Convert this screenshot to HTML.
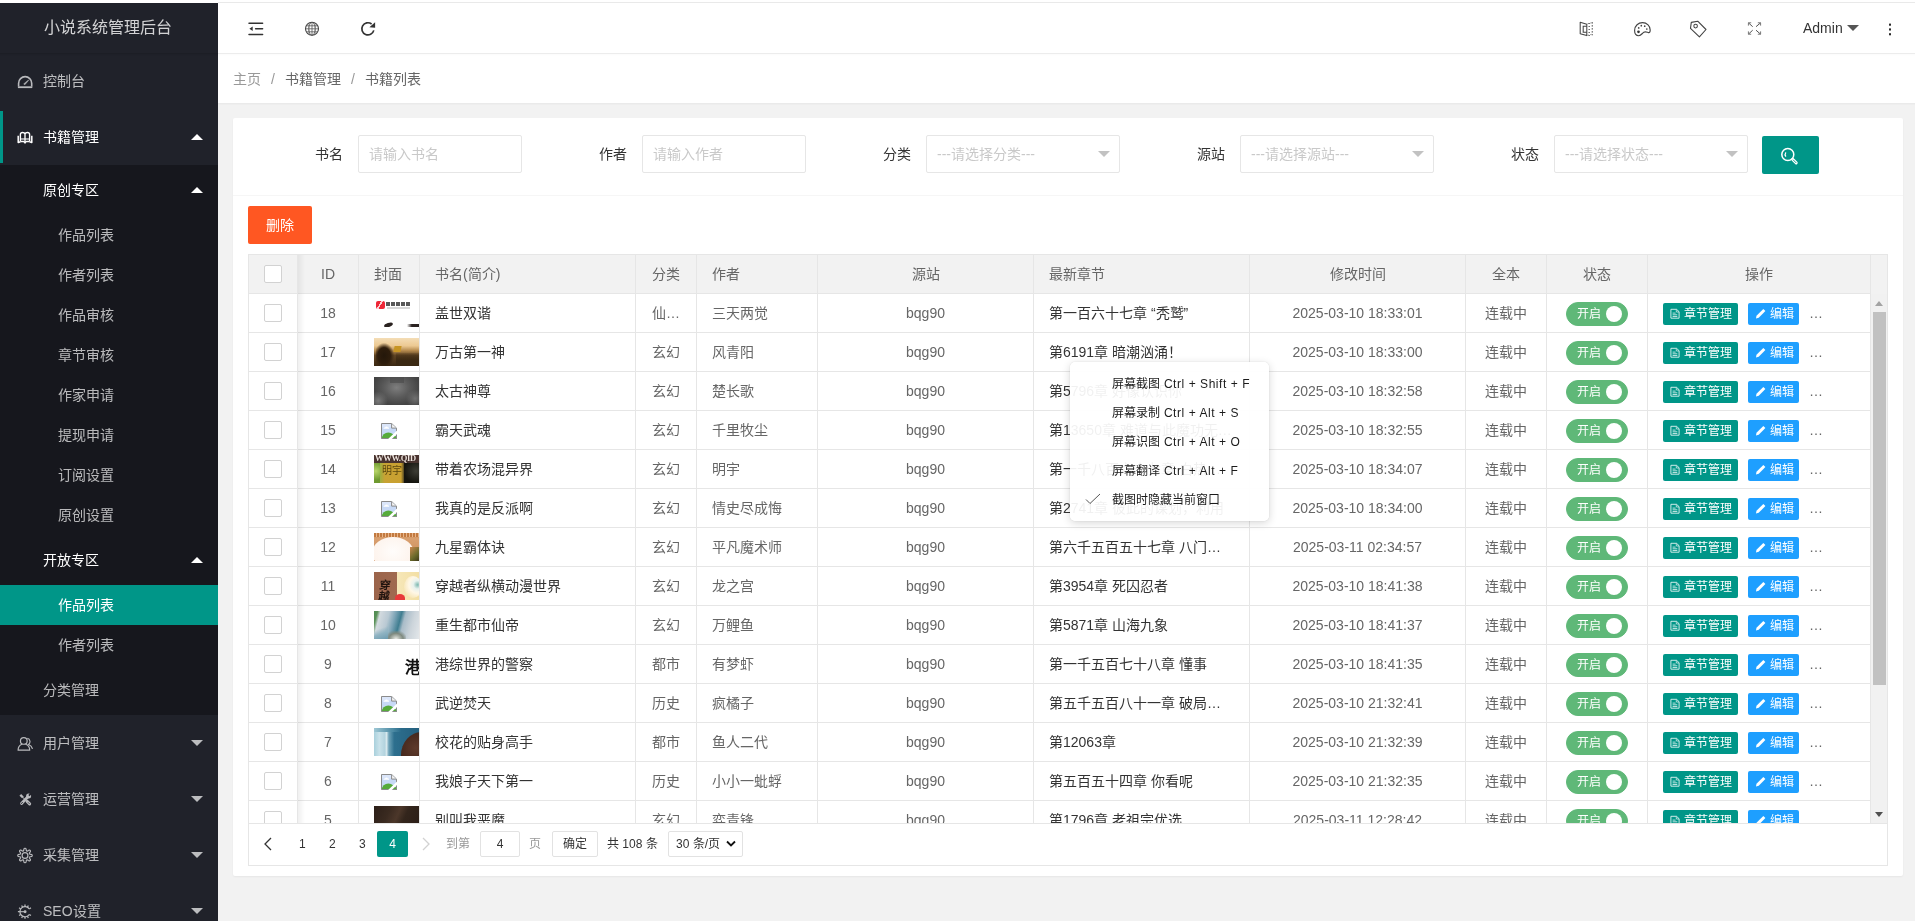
<!DOCTYPE html>
<html lang="zh-CN">
<head>
<meta charset="utf-8">
<title>小说系统管理后台</title>
<style>
*{box-sizing:border-box;margin:0;padding:0}
html,body{width:1915px;height:921px;overflow:hidden;background:#fff}
body{font-family:"Liberation Sans",sans-serif;font-size:14px;color:#333;line-height:24px;position:relative}
i,em{font-style:normal}
#topline{position:absolute;left:218px;top:2px;width:1697px;height:1px;background:#e9e9e9}
#pg{position:absolute;left:-2px;top:3px;width:1920px;height:918px;overflow:hidden;background:#f2f2f2;-webkit-font-smoothing:antialiased}
#side,#hd,#bc,#card,#ctx{will-change:transform}

/* ---------- side ---------- */
#side{position:absolute;left:0;top:0;width:220px;height:918px;background:#20222a;color:#fff;overflow:hidden}
#logo{position:absolute;left:0;top:0;width:220px;height:50px;line-height:50px;text-align:center;font-size:16px;color:rgba(255,255,255,.8);background:#20222a;box-shadow:0 1px 2px 0 rgba(0,0,0,.15);z-index:2}
#nav{position:absolute;left:0;top:50px;width:220px}
.ni{position:relative;height:56px;line-height:56px;padding-left:45px;color:rgba(255,255,255,.7);font-size:14px;white-space:nowrap}
.ni.on{color:#fff}
.ni svg.ic{position:absolute;left:19px;top:50%;margin-top:-8px}
.more{position:absolute;right:15px;top:50%;width:0;height:0;border:6px solid transparent;border-top-color:rgba(255,255,255,.7);margin-top:-3px}
.more.up{border-top-color:transparent;border-bottom-color:#fff;margin-top:-9px}
.child{background:rgba(0,0,0,.3);padding:5px 0}
.child .child{background:none}
.ci{position:relative;height:40px;line-height:40px;padding-left:45px;color:rgba(255,255,255,.7);white-space:nowrap}
.ci.on{color:#fff}
.ci.l2{padding-left:60px}
.ci.this{background:#009688;color:#fff}
#navbar{position:absolute;left:0;top:108px;width:5px;height:52px;background:#009688}

/* ---------- header ---------- */
#hd{position:absolute;left:220px;top:0;width:1700px;height:51px;background:#fff;border-bottom:1px solid #ececec;box-shadow:0 1px 2px 0 rgba(0,0,0,.02);z-index:3}
#hd svg{position:absolute}
#admin{position:absolute;left:1585px;top:0;height:50px;line-height:51px;font-size:14px;color:#333}
#admin i{position:absolute;left:44px;top:22px;border:6px solid transparent;border-top-color:#555;border-bottom:none}
#bc{position:absolute;left:220px;top:50px;width:1700px;height:50px;line-height:52px;background:#fff;padding-left:15px;font-size:14px;color:#666;box-shadow:0 1px 2px 0 rgba(0,0,0,.05);z-index:2;white-space:nowrap}
#bc span{margin:0 10px;color:#999}
#bc .a0{color:#999}

/* ---------- card ---------- */
#card{position:absolute;left:235px;top:115px;width:1670px;height:758px;background:#fff;border-radius:2px;box-shadow:0 1px 2px 0 rgba(0,0,0,.05)}
#fm{position:absolute;left:0;top:0;width:1670px;height:78px;border-bottom:1px solid #f6f6f6}
.lb{position:absolute;top:17px;width:110px;height:38px;line-height:20px;padding:9px 15px;text-align:right;color:#333;white-space:nowrap}
.ip{position:absolute;top:17px;height:38px;border:1px solid #e6e6e6;border-radius:2px;background:#fff;line-height:36px;padding-left:10px;color:#c9c9c9;font-size:14px;white-space:nowrap;overflow:hidden}
.ip i{position:absolute;right:9px;top:50%;margin-top:-3px;border:6px solid transparent;border-top-color:#c2c2c2;border-bottom:none}
#sbtn{position:absolute;left:1529px;top:18px;width:57px;height:38px;background:#009688;border-radius:2px}
#del{position:absolute;left:15px;top:88px;width:64px;height:38px;line-height:38px;text-align:center;background:#ff5722;color:#fff;font-size:14px;border-radius:2px}

/* ---------- table ---------- */
#tv{position:absolute;left:15px;top:136px;width:1640px;height:612px;border:1px solid #e6e6e6;overflow:hidden;color:#666}
#th{position:absolute;left:0;top:0;width:1638px;height:39px;background:#f2f2f2;border-bottom:1px solid #e6e6e6;z-index:2}
#tb{position:absolute;left:0;top:39px;width:1622px;height:529px;overflow:hidden}
.tr{position:absolute;left:0;width:1622px;height:39px;border-bottom:1px solid #e6e6e6}
.td,.thc{position:absolute;top:0;height:38px;line-height:28px;padding:5px 15px;border-right:1px solid #e6e6e6;white-space:nowrap;overflow:hidden;font-size:14px;color:#666}
.thc{height:38px}
.ctr{text-align:center}
.dk{color:#333}
.c0{left:0;width:49px;padding:5px 0;text-align:center;background:#fff}
#th .c0{background:#f2f2f2}
.c1{left:49px;width:61px}
.c2{left:110px;width:61px;padding-right:0}
.c3{left:171px;width:216px}
.c4{left:387px;width:61px}
.c5{left:448px;width:121px}
.c6{left:569px;width:216px}
.c7{left:785px;width:216px}
.c8{left:1001px;width:216px}
.c9c{left:1217px;width:81px}
.c10{left:1298px;width:101px;padding:5px 0}
.c11{left:1399px;width:223px}
.cb{display:inline-block;width:18px;height:18px;border:1px solid #d2d2d2;border-radius:2px;background:#fff;vertical-align:top;margin-top:5px}
#fixsh{position:absolute;left:49px;top:0;width:7px;height:568px;background:linear-gradient(to right,rgba(0,0,0,.06),rgba(0,0,0,0));z-index:3;pointer-events:none}
.cv{display:block;position:relative;width:46px;height:28px;overflow:hidden}
.cv i{position:absolute;display:block}
.brk{display:block;margin:7px 0 0 7px}
.sw{display:inline-block;position:relative;width:62px;height:24px;border:1px solid #5fb878;border-radius:20px;background:#5fb878;vertical-align:top;margin-top:3px}
.sw em{position:absolute;left:10px;top:0;line-height:22px;font-size:12px;color:#fff}
.sw i{position:absolute;left:39px;top:3px;width:16px;height:16px;border-radius:50%;background:#fff}
.btn{display:inline-block;vertical-align:top;border-radius:2px;color:#fff;white-space:nowrap}
.btn.xs{height:22px;line-height:22px;padding:0 5px;font-size:12px;margin-top:4px}
.btn.teal{background:#009688;width:75px}
.btn.blue{background:#1e9fff;margin-left:10px;width:51px}
.bi{display:inline-block;vertical-align:top;margin:5px 4px 0 2px}
.dots{display:inline-block;vertical-align:top;margin-left:10px;color:#666}
#patch{position:absolute;left:1622px;top:0;width:16px;height:39px;background:#f2f2f2}
#sb{position:absolute;left:1622px;top:39px;width:16px;height:529px;background:#f1f1f1}
#sb .thumb{position:absolute;left:2px;top:18px;width:13px;height:373px;background:#c1c1c1}
#sb .au{position:absolute;left:4px;top:7px;border:4px solid transparent;border-bottom:5px solid #a3a3a3;border-top:none}
#sb .ad{position:absolute;left:4px;top:518px;border:4px solid transparent;border-top:5px solid #505050;border-bottom:none}

/* ---------- pagination ---------- */
#pgn{position:absolute;left:0;top:568px;width:1638px;height:42px;border-top:1px solid #e6e6e6;background:#fff;font-size:12px;color:#333;z-index:4}
#pgn span{position:absolute;top:7px;height:26px;line-height:26px;white-space:nowrap}
#pgn .cur{background:#009688;color:#fff;border-radius:2px;text-align:center}
#pgn .box{border:1px solid #e2e2e2;border-radius:2px;text-align:center;line-height:24px;background:#fff}
#pgn .g{color:#999}

/* ---------- context menu ---------- */
#ctx{position:absolute;left:1072px;top:359px;width:199px;height:159px;background:rgba(255,255,255,.93);border-radius:5px;box-shadow:0 2px 8px rgba(0,0,0,.16),0 0 1px rgba(0,0,0,.25);z-index:20;font-size:12px;color:#1b1b1b}
#ctx div{position:absolute;left:42px;height:20px;line-height:20px;white-space:nowrap}
#ctx span{letter-spacing:.55px}
#ctx svg{position:absolute;left:15px;top:131px}

/* ---------- cover thumbnails (CSS approximations) ---------- */
.cv{width:45px;height:28px}
.k17{background:linear-gradient(to bottom,#f4ddb6 0,#ecc992 28%,#b58a4e 45%,#5e4322 62%,#3a2712 100%)}
.k17 i:nth-child(1){left:2px;top:5px;width:18px;height:23px;background:radial-gradient(ellipse at 45% 55%,#24170a 0,#2e1d0c 45%,rgba(58,39,18,0) 72%)}
.k17 i:nth-child(2){left:20px;top:8px;width:7px;height:6px;background:#c79524;transform:skewX(-12deg)}
.k17 i:nth-child(3){left:22px;top:15px;width:23px;height:13px;background:linear-gradient(to bottom,rgba(70,48,22,.2),#3a2812 60%)}
.k16{background:radial-gradient(ellipse at 50% 38%,#7e7e7e 0,#5c5c5c 38%,#454545 70%,#3b3b3b 100%)}
.k16 i:nth-child(1){left:0;top:14px;width:14px;height:14px;background:radial-gradient(circle at 30% 70%,#7a7a7a,rgba(70,70,70,0) 70%)}
.k16 i:nth-child(2){left:32px;top:12px;width:13px;height:16px;background:radial-gradient(circle at 70% 60%,#707070,rgba(70,70,70,0) 70%)}
.k16 i:nth-child(3){left:16px;top:0;width:14px;height:6px;background:#4a4a4a;opacity:.6}
.k14{background:linear-gradient(to right,#7c9a35 0,#9fae3e 14%,#c8a233 24%,#c9a030 60%,#3a3520 68%,#16160f 78%,#1d1d16 100%)}
.k14 i:nth-child(1){left:0;top:0;width:45px;height:8px;background:#4a3430}
.k14 i:nth-child(2){left:0;top:8px;width:6px;height:20px;background:radial-gradient(circle at 30% 40%,#b9d66a,#6f9a30 70%)}
.k14 i:nth-child(3){left:30px;top:8px;width:15px;height:20px;background:radial-gradient(ellipse at 80% 40%,#3d3d35 0,#14140e 70%)}
.k12{background:linear-gradient(to bottom,#c98850 0,#d9a070 20%,#c88a55 100%)}
.k12 i:nth-child(1){left:-2px;top:4px;width:42px;height:32px;border-radius:50%;background:radial-gradient(ellipse at 50% 45%,#fffdfb 0,#fdf3ec 70%,#f4dccb 100%)}
.k12 i:nth-child(2){left:36px;top:14px;width:9px;height:14px;background:linear-gradient(135deg,#c98850 0,#6a6a2a 60%,#3f3a1a 100%)}
.k12 i:nth-child(3){left:0;top:0;width:45px;height:4px;background:repeating-linear-gradient(to right,#c27a40 0 2px,#e8b58a 2px 3px)}
.k11{background:linear-gradient(to right,#9b644b 0,#a06a50 50%,#f6e7b8 52%,#f3dfa4 100%)}
.k11 i:nth-child(1){left:0;top:0;width:0;height:0}
.k11 i:nth-child(2){left:21px;top:22px;width:10px;height:8px;border-radius:50% 50% 0 0;background:#e83a3a}
.k11 i:nth-child(3){left:30px;top:4px;width:18px;height:22px;border-radius:50%;background:radial-gradient(circle at 75% 40%,#7fb9b0 0,#e8f2ee 22%,#fff7e6 45%,#f1d993 100%)}
.k10{background:linear-gradient(105deg,#4d8a50 0,#5a9158 7%,#d3dadf 13%,#b9c9d3 30%,#7fa6b8 42%,#3f7d90 54%,#a9bcc8 62%,#cdd5db 80%,#e3e7ea 100%)}
.k10 i:nth-child(1){left:12px;top:20px;width:20px;height:8px;background:radial-gradient(ellipse at 50% 100%,#e9ebe6 0,#7f8a80 50%,rgba(63,125,144,0) 80%)}
.k10 i:nth-child(2){left:0;top:14px;width:14px;height:14px;background:linear-gradient(160deg,rgba(0,0,0,0) 30%,#8fb3c2 60%,#6d9bb0 100%)}
.k7{background:linear-gradient(to right,#a9d0dc 0,#c9e2ea 12%,#b3d3de 24%,#d9e9ee 28%,#6fa3b8 33%,#2d6f8e 45%,#245f7e 100%)}
.k7 i:nth-child(1){left:27px;top:4px;width:42px;height:46px;border-radius:50%;background:radial-gradient(circle at 35% 35%,#5e3a2b 0,#41251a 45%,#2c1710 100%)}
.k7 i:nth-child(2){left:0;top:0;width:45px;height:4px;background:linear-gradient(to right,#9fc8d5,#4e8ca5 40%,rgba(0,0,0,0) 60%)}
.k5{background:linear-gradient(115deg,#2c1f18 0,#3a2a20 30%,#4c372a 48%,#33251c 62%,#2a1d17 100%)}
.k18{background:#fff}
.k18 .r{left:2px;top:2px;width:9px;height:8px;border-radius:2px;background:linear-gradient(120deg,#ee2737 0 38%,#fbd0d4 38% 52%,#ee2737 52%)}
.k18 .t{left:12px;top:3px;width:25px;height:4px;background:repeating-linear-gradient(to right,#3c3c3c 0 4px,rgba(0,0,0,0) 4px 5px);opacity:.85;box-shadow:0 4px 0 -1px rgba(120,120,120,.35)}
.k18 .b1{left:10px;top:24px;width:9px;height:4px;border-radius:50%;background:#2a2220;transform:rotate(-18deg)}
.k18 .b2{left:33px;top:25px;width:12px;height:4px;background:linear-gradient(to right,rgba(0,0,0,0),#2a2220 40%)}
.k9{background:#fff}
.k9 b{position:absolute;left:31px;top:10px;font:bold 16px/16px "Liberation Serif",serif;color:#111}

.k14 u{position:absolute;left:1px;top:-2px;font:bold 8.500px/10px "Liberation Serif",serif;color:#efe5df;text-decoration:none;letter-spacing:-.3px;white-space:nowrap;text-shadow:0 0 1px #1c0d0a}
.k14 b{position:absolute;left:8px;top:10px;font:normal 10px/12px "Liberation Sans",sans-serif;color:rgba(70,55,8,.85);white-space:nowrap}
.k11 b{position:absolute;left:5px;top:8px;font:bold 11px/11px "Liberation Serif",serif;color:#20140f;transform:skewX(-8deg)}
.k11 b.b2{top:19px;left:4px}

</style>
</head>
<body>
<div id="topline"></div>
<div id="pg">

<!-- ================= SIDE ================= -->
<div id="side">
  <div id="logo">小说系统管理后台</div>
  <div id="nav">
    <div class="ni"><svg class="ic" width="16" height="16" viewBox="0 0 16 16"><path d="M1.600 13.400v-3.200a6.550 6.550 0 0 1 13.100 0v3.200" fill="none" stroke="#b9babd" stroke-width="1.600"/><path d="M.900 14.200h14.400" stroke="#b9babd" stroke-width="1.800"/><path d="M6.700 10.900l1.100.9 3.900-4.500-.3-.3z" fill="#b9babd" stroke="#b9babd" stroke-width=".5" stroke-linejoin="round"/></svg>控制台</div>
    <div class="ni on"><svg class="ic" width="16" height="16" viewBox="0 0 16 16"><path d="M3.400 12.600V5.400Q3.400 3.500 5.600 3.500 7.600 3.500 8 5.100V12.800M8 5.100Q8.400 3.500 10.400 3.500 12.600 3.500 12.600 5.400V12.600" fill="none" stroke="#fff" stroke-width="1.350"/><path d="M3.400 10h9.200" stroke="#fff" stroke-width="1.100"/><path d="M3.400 12.500H6.300Q7.500 12.700 8 14 8.500 12.700 9.700 12.500H12.600" fill="none" stroke="#fff" stroke-width="1.400" stroke-linejoin="round"/><path d="M1.200 6.800v6.800l2.200-.9M14.800 6.800v6.800l-2.200-.9" fill="none" stroke="#fff" stroke-width="1.500" stroke-linejoin="round"/></svg>书籍管理<span class="more up"></span></div>
    <div class="child">
      <div class="ci on">原创专区<span class="more up"></span></div>
      <div class="child">
        <div class="ci l2">作品列表</div>
        <div class="ci l2">作者列表</div>
        <div class="ci l2">作品审核</div>
        <div class="ci l2">章节审核</div>
        <div class="ci l2">作家申请</div>
        <div class="ci l2">提现申请</div>
        <div class="ci l2">订阅设置</div>
        <div class="ci l2">原创设置</div>
      </div>
      <div class="ci on">开放专区<span class="more up"></span></div>
      <div class="child">
        <div class="ci l2 this">作品列表</div>
        <div class="ci l2">作者列表</div>
      </div>
      <div class="ci">分类管理</div>
    </div>
    <div class="ni"><svg class="ic" width="16" height="16" viewBox="0 0 16 16"><circle cx="6.800" cy="5.900" r="3.350" fill="none" stroke="#b9babd" stroke-width="1.200"/><path d="M4.900 9.300C2.500 10.200 1.100 12.200 1.100 15.200H12.700C12.700 12.200 11.200 10.200 8.700 9.300" fill="none" stroke="#b9babd" stroke-width="1.200" stroke-linejoin="round"/><path d="M10.300 3.200C13.400 3.900 13.800 7.800 11.500 9.500 13.600 10.300 15 11.800 15.500 13.900" fill="none" stroke="#b9babd" stroke-width="1.150"/></svg>用户管理<span class="more"></span></div>
    <div class="ni"><svg class="ic" width="16" height="16" viewBox="0 0 16 16"><path d="M3.300 3.900l2.700 2.600" stroke="#b9babd" stroke-width="2.400"/><path d="M5.600 6.200l3.600 3.500" stroke="#b9babd" stroke-width="1"/><path d="M10.100 10.400l2.500 2.500" stroke="#b9babd" stroke-width="3.100" stroke-linecap="round"/><path d="M10.700 5.900L4.500 12.400" stroke="#b9babd" stroke-width="2.900" stroke-linecap="round"/><circle cx="11.600" cy="5" r="2.500" fill="#b9babd"/><path d="M11.900 4.700l2.300-2.300" stroke="#20222a" stroke-width="1.700"/><path d="M5.500 11.300l-1.500 1.600" stroke="#20222a" stroke-width=".9" stroke-linecap="round"/><path d="M11.300 11.600l1 1" stroke="#20222a" stroke-width=".8" stroke-linecap="round"/></svg>运营管理<span class="more"></span></div>
    <div class="ni"><svg class="ic" width="16" height="17" viewBox="0 0 16 17"><path d="M15.25 8.50 L15.21 8.78 L15.09 9.06 L14.89 9.31 L14.57 9.54 L13.88 9.67 L13.20 9.75 L12.88 9.88 L12.65 10.01 L12.49 10.16 L12.39 10.32 L12.34 10.50 L12.35 10.72 L12.42 10.98 L12.56 11.29 L12.99 11.83 L13.38 12.41 L13.44 12.79 L13.41 13.12 L13.30 13.40 L13.13 13.63 L12.90 13.80 L12.62 13.91 L12.29 13.94 L11.91 13.88 L11.33 13.49 L10.79 13.06 L10.48 12.92 L10.22 12.85 L10.00 12.84 L9.82 12.89 L9.66 12.99 L9.51 13.15 L9.38 13.38 L9.25 13.70 L9.17 14.38 L9.04 15.07 L8.81 15.39 L8.56 15.59 L8.28 15.71 L8.00 15.75 L7.72 15.71 L7.44 15.59 L7.19 15.39 L6.96 15.07 L6.83 14.38 L6.75 13.70 L6.62 13.38 L6.49 13.15 L6.34 12.99 L6.18 12.89 L6.00 12.84 L5.78 12.85 L5.52 12.92 L5.21 13.06 L4.67 13.49 L4.09 13.88 L3.71 13.94 L3.38 13.91 L3.10 13.80 L2.87 13.63 L2.70 13.40 L2.59 13.12 L2.56 12.79 L2.62 12.41 L3.01 11.83 L3.44 11.29 L3.58 10.98 L3.65 10.72 L3.66 10.50 L3.61 10.32 L3.51 10.16 L3.35 10.01 L3.12 9.88 L2.80 9.75 L2.12 9.67 L1.43 9.54 L1.11 9.31 L0.91 9.06 L0.79 8.78 L0.75 8.50 L0.79 8.22 L0.91 7.94 L1.11 7.69 L1.43 7.46 L2.12 7.33 L2.80 7.25 L3.12 7.12 L3.35 6.99 L3.51 6.84 L3.61 6.68 L3.66 6.50 L3.65 6.28 L3.58 6.02 L3.44 5.71 L3.01 5.17 L2.62 4.59 L2.56 4.21 L2.59 3.88 L2.70 3.60 L2.87 3.37 L3.10 3.20 L3.38 3.09 L3.71 3.06 L4.09 3.12 L4.67 3.51 L5.21 3.94 L5.52 4.08 L5.78 4.15 L6.00 4.16 L6.18 4.11 L6.34 4.01 L6.49 3.85 L6.62 3.62 L6.75 3.30 L6.83 2.62 L6.96 1.93 L7.19 1.61 L7.44 1.41 L7.72 1.29 L8.00 1.25 L8.28 1.29 L8.56 1.41 L8.81 1.61 L9.04 1.93 L9.17 2.62 L9.25 3.30 L9.38 3.62 L9.51 3.85 L9.66 4.01 L9.82 4.11 L10.00 4.16 L10.22 4.15 L10.48 4.08 L10.79 3.94 L11.33 3.51 L11.91 3.12 L12.29 3.06 L12.62 3.09 L12.90 3.20 L13.13 3.37 L13.30 3.60 L13.41 3.88 L13.44 4.21 L13.38 4.59 L12.99 5.17 L12.56 5.71 L12.42 6.02 L12.35 6.28 L12.34 6.50 L12.39 6.68 L12.49 6.84 L12.65 6.99 L12.88 7.12 L13.20 7.25 L13.88 7.33 L14.57 7.46 L14.89 7.69 L15.09 7.94 L15.21 8.22Z" fill="none" stroke="#b9babd" stroke-width="1.150" stroke-linejoin="round"/><circle cx="8" cy="8.500" r="2.900" fill="none" stroke="#b9babd" stroke-width="1.200"/></svg>采集管理<span class="more"></span></div>
    <div class="ni"><svg class="ic" width="16" height="17" viewBox="0 0 16 17"><path d="M12.28 11.48A5.1 5.1 0 1 1 12.28 5.92" fill="none" stroke="#b9babd" stroke-width="1.250"/><path d="M12.28 11.48 L13.95 12.57M10.39 13.20 L11.33 14.97M8.00 13.80 L8.00 15.80M5.61 13.20 L4.67 14.97M3.72 11.48 L2.05 12.57M2.90 8.70 L0.90 8.70M3.72 5.92 L2.05 4.83M5.61 4.20 L4.67 2.43M8.00 3.60 L8.00 1.60M10.39 4.20 L11.33 2.43M12.28 5.92 L13.95 4.83" stroke="#b9babd" stroke-width="1.300"/><path d="M2.900 8.700h4.600" stroke="#b9babd" stroke-width="1.100"/><circle cx="8.100" cy="8.700" r="1.450" fill="#b9babd"/></svg>SEO设置<span class="more"></span></div>
  </div>
  <div id="navbar"></div>
</div>

<!-- ================= HEADER ================= -->
<div id="hd">
  <!-- flexible -->
  <svg style="left:30px;top:17px" width="16" height="16" viewBox="0 0 16 16"><path d="M1 3.200h13.600M7.600 8.700h7M1 14.400h13.600" stroke="#333" stroke-width="1.500" stroke-linecap="round"/><path d="M1.400 8.700l3.300-2.300v4.600z" fill="#333"/></svg>
  <!-- globe -->
  <svg style="left:86px;top:18px" width="16" height="16" viewBox="0 0 16 16"><circle cx="8" cy="7.800" r="6.500" fill="none" stroke="#444" stroke-width="1.100"/><ellipse cx="8" cy="7.800" rx="3.100" ry="6.500" fill="none" stroke="#555" stroke-width=".8"/><path d="M8 1.300v13M2.200 4.800h11.600M2.200 10.800h11.600M1.500 7.800h13" stroke="#555" stroke-width=".8"/><path d="M5.200 2.200c-.9 3.600-.9 7.600 0 11.200M10.800 2.200c.9 3.600.9 7.600 0 11.200" fill="none" stroke="#666" stroke-width=".6"/></svg>
  <!-- refresh -->
  <svg style="left:142px;top:18px" width="16" height="16" viewBox="0 0 16 16"><path d="M13.800 9.400A6.100 6.100 0 1 1 11.600 3" fill="none" stroke="#333" stroke-width="1.700"/><path d="M15.100 1.200v5.600L9.400 6.200z" fill="#333"/></svg>
  <!-- note -->
  <svg style="left:1360px;top:18px" width="16" height="16" viewBox="0 0 16 16"><path d="M2.200 1.300l6.600 1.900v11.400L2.200 12.700z" fill="none" stroke="#444" stroke-width="1.050" stroke-linejoin="round"/><path d="M8.800 5.200H5.200v6.100h3.600" fill="none" stroke="#444" stroke-width="1.050"/><path d="M11.200 1.900v13M14.300 1.300v13" stroke="#555" stroke-width="1.300" stroke-dasharray="1.100 1.900"/><path d="M9.600 2.700l5.200-1.200M9.600 14.300l5.200-1.300" stroke="#666" stroke-width=".8" stroke-dasharray="1.200 1.600"/></svg>
  <!-- theme -->
  <svg style="left:1415px;top:18px" width="18" height="16" viewBox="0 0 18 16"><path d="M1.600 9.500C1.600 4.500 5.500 1.700 9.500 1.700c4.500 0 7.700 3.300 7.700 7.300 0 2-.7 2.900-1.700 2.600-1.500-.4-3-1.400-4.700-.4-1.800 1.100-2.600 3.500-5 3.500-2.600 0-4.200-2.200-4.200-5.200z" fill="none" stroke="#444" stroke-width="1.150"/><circle cx="5.500" cy="10.800" r="1.350" fill="#333"/><circle cx="5.700" cy="6.900" r=".85" fill="#444"/><circle cx="8.300" cy="4.700" r=".85" fill="#444"/><circle cx="11.700" cy="5.200" r=".85" fill="#444"/><circle cx="13.800" cy="8" r=".85" fill="#444"/></svg>
  <!-- tag -->
  <svg style="left:1471px;top:17px" width="18" height="18" viewBox="0 0 18 18"><path d="M2.300 2.400l6.400-1.200 8.300 8.300-6.600 7.300-8.900-8.500z" fill="none" stroke="#444" stroke-width="1.100" stroke-linejoin="round"/><circle cx="6.600" cy="6.100" r="1.800" fill="none" stroke="#444" stroke-width="1.050"/></svg>
  <!-- fullscreen -->
  <svg style="left:1529px;top:18px" width="16" height="16" viewBox="0 0 16 16"><path d="M5.700 5.700L1.500 1.900M9 5.700l4.500-3.800M5.700 9.200l-4.200 3.900M9 9.200l4.500 3.900" stroke="#555" stroke-width="1" fill="none"/><path d="M1.400 4.600V1.800h2.800M10.800 1.800h2.800v2.800M13.600 10.400v2.800h-2.800M4.200 13.200H1.400v-2.800" stroke="#777" stroke-width="1" fill="none"/></svg>
  <div id="admin">Admin<i></i></div>
  <!-- more vertical -->
  <svg style="left:1669px;top:18px" width="6" height="16" viewBox="0 0 6 16"><rect x="2" y="2.600" width="2" height="2.100" fill="#2a2a2a"/><rect x="2" y="7.400" width="2" height="2.100" fill="#2a2a2a"/><rect x="2" y="12.200" width="2" height="2.100" fill="#2a2a2a"/></svg>
</div>
<div id="bc"><a class="a0">主页</a><span>/</span><a>书籍管理</a><span>/</span><a>书籍列表</a></div>

<!-- ================= CARD ================= -->
<div id="card">
  <div id="fm">
    <div class="lb" style="left:15px">书名</div><div class="ip" style="left:125px;width:164px">请输入书名</div>
    <div class="lb" style="left:299px">作者</div><div class="ip" style="left:409px;width:164px">请输入作者</div>
    <div class="lb" style="left:583px">分类</div><div class="ip" style="left:693px;width:194px">---请选择分类---<i></i></div>
    <div class="lb" style="left:897px">源站</div><div class="ip" style="left:1007px;width:194px">---请选择源站---<i></i></div>
    <div class="lb" style="left:1211px">状态</div><div class="ip" style="left:1321px;width:194px">---请选择状态---<i></i></div>
    <div id="sbtn"><svg style="position:absolute;left:18px;top:10px" width="20" height="20" viewBox="0 0 20 20"><circle cx="7.800" cy="8.500" r="6" fill="none" stroke="#fff" stroke-width="1.500"/><path d="M5.900 6.300Q4.300 8.500 5.900 10.700" fill="none" stroke="#fff" stroke-width="1.200"/><path d="M12.700 13.400l3.500 3.500" stroke="#fff" stroke-width="3" stroke-linecap="round"/><path d="M13.300 14l2.700 2.700" stroke="#009688" stroke-width=".9" stroke-linecap="round"/></svg></div>
  </div>
  <div id="del">删除</div>

  <div id="tv">
    <div id="th">
      <div class="thc c0"><span class="cb"></span></div>
      <div class="thc c1 ctr">ID</div>
      <div class="thc c2">封面</div>
      <div class="thc c3">书名(简介)</div>
      <div class="thc c4 ctr">分类</div>
      <div class="thc c5">作者</div>
      <div class="thc c6 ctr">源站</div>
      <div class="thc c7">最新章节</div>
      <div class="thc c8 ctr">修改时间</div>
      <div class="thc c9c ctr">全本</div>
      <div class="thc c10 ctr">状态</div>
      <div class="thc c11 ctr">操作</div>
      <div id="patch"></div>
    </div>
    <div id="tb">
<div class="tr" style="top:0px">
<div class="td c0"><span class="cb"></span></div>
<div class="td c1 ctr">18</div>
<div class="td c2"><span class="cv k18"><i class="r"></i><i class="t"></i><i class="b1"></i><i class="b2"></i></span></div>
<div class="td c3 dk">盖世双谐</div>
<div class="td c4 ctr">仙…</div>
<div class="td c5">三天两觉</div>
<div class="td c6 ctr">bqg90</div>
<div class="td c7 dk">第一百六十七章 “秃鹫”</div>
<div class="td c8 ctr">2025-03-10 18:33:01</div>
<div class="td c9c ctr">连载中</div>
<div class="td c10 ctr"><span class="sw"><em>开启</em><i></i></span></div>
<div class="td c11"><span class="btn xs teal"><svg class="bi" width="10" height="11" viewBox="0 0 10 11"><path d="M.9 1.300h5.600l2.600 2.400v6.500H.9z" fill="none" stroke="#fff" stroke-width="1" opacity=".8"/><path d="M6.300 1.500v2.500h2.600" fill="none" stroke="#fff" stroke-width=".8" opacity=".8"/><path d="M2.600 5.100h3M2.600 6.800h4.700M2.600 8.500h4.700" stroke="#fff" stroke-width=".9" opacity=".8"/></svg>章节管理</span><span class="btn xs blue"><svg class="bi" width="11" height="11" viewBox="0 0 11 11"><path d="M1 10.400l.5-2.700L8.300 1l2.100 2.100-6.700 6.700z" fill="#fff"/></svg>编辑</span><span class="dots">…</span></div>
</div>
<div class="tr" style="top:39px">
<div class="td c0"><span class="cb"></span></div>
<div class="td c1 ctr">17</div>
<div class="td c2"><span class="cv k17"><i></i><i></i><i></i></span></div>
<div class="td c3 dk">万古第一神</div>
<div class="td c4 ctr">玄幻</div>
<div class="td c5">风青阳</div>
<div class="td c6 ctr">bqg90</div>
<div class="td c7 dk">第6191章 暗潮汹涌！</div>
<div class="td c8 ctr">2025-03-10 18:33:00</div>
<div class="td c9c ctr">连载中</div>
<div class="td c10 ctr"><span class="sw"><em>开启</em><i></i></span></div>
<div class="td c11"><span class="btn xs teal"><svg class="bi" width="10" height="11" viewBox="0 0 10 11"><path d="M.9 1.300h5.600l2.600 2.400v6.500H.9z" fill="none" stroke="#fff" stroke-width="1" opacity=".8"/><path d="M6.300 1.500v2.500h2.600" fill="none" stroke="#fff" stroke-width=".8" opacity=".8"/><path d="M2.600 5.100h3M2.600 6.800h4.700M2.600 8.500h4.700" stroke="#fff" stroke-width=".9" opacity=".8"/></svg>章节管理</span><span class="btn xs blue"><svg class="bi" width="11" height="11" viewBox="0 0 11 11"><path d="M1 10.400l.5-2.700L8.300 1l2.100 2.100-6.700 6.700z" fill="#fff"/></svg>编辑</span><span class="dots">…</span></div>
</div>
<div class="tr" style="top:78px">
<div class="td c0"><span class="cb"></span></div>
<div class="td c1 ctr">16</div>
<div class="td c2"><span class="cv k16"><i></i><i></i><i></i></span></div>
<div class="td c3 dk">太古神尊</div>
<div class="td c4 ctr">玄幻</div>
<div class="td c5">楚长歌</div>
<div class="td c6 ctr">bqg90</div>
<div class="td c7 dk">第5796章 好像认识你</div>
<div class="td c8 ctr">2025-03-10 18:32:58</div>
<div class="td c9c ctr">连载中</div>
<div class="td c10 ctr"><span class="sw"><em>开启</em><i></i></span></div>
<div class="td c11"><span class="btn xs teal"><svg class="bi" width="10" height="11" viewBox="0 0 10 11"><path d="M.9 1.300h5.600l2.600 2.400v6.500H.9z" fill="none" stroke="#fff" stroke-width="1" opacity=".8"/><path d="M6.300 1.500v2.500h2.600" fill="none" stroke="#fff" stroke-width=".8" opacity=".8"/><path d="M2.600 5.100h3M2.600 6.800h4.700M2.600 8.500h4.700" stroke="#fff" stroke-width=".9" opacity=".8"/></svg>章节管理</span><span class="btn xs blue"><svg class="bi" width="11" height="11" viewBox="0 0 11 11"><path d="M1 10.400l.5-2.700L8.300 1l2.100 2.100-6.700 6.700z" fill="#fff"/></svg>编辑</span><span class="dots">…</span></div>
</div>
<div class="tr" style="top:117px">
<div class="td c0"><span class="cb"></span></div>
<div class="td c1 ctr">15</div>
<div class="td c2"><svg class="brk" width="16" height="16" viewBox="0 0 16 16"><path d="M.5 .5h10.200l4.800 4.600v10.400h-15z" fill="#c7d9f6"/><path d="M1 1h9.500v3.500H1z" fill="#dbe6fa"/><path d="M2.400 5.700c-.1-.9.800-1.400 1.600-1.100.5-1.500 2.500-1.500 2.900 0 .9-.2 1.500.4 1.300 1.100z" fill="#fff"/><ellipse cx="7.400" cy="15.500" rx="6.600" ry="6.100" fill="#56ab3b"/><ellipse cx="13.200" cy="16" rx="2.600" ry="3.200" fill="#56ab3b"/><path d="M.5 .5h10.200l4.800 4.600v10.400h-15z" fill="none" stroke="#8b8b8b"/><path d="M10.600 .8v4.300h4.600" fill="#f4f4f4" stroke="#8b8b8b"/><path d="M6.600 16.500L16.500 6.900v3.600L10.300 16.500z" fill="#fff"/></svg></div>
<div class="td c3 dk">霸天武魂</div>
<div class="td c4 ctr">玄幻</div>
<div class="td c5">千里牧尘</div>
<div class="td c6 ctr">bqg90</div>
<div class="td c7 dk">第13650章 难道与此魔功无…</div>
<div class="td c8 ctr">2025-03-10 18:32:55</div>
<div class="td c9c ctr">连载中</div>
<div class="td c10 ctr"><span class="sw"><em>开启</em><i></i></span></div>
<div class="td c11"><span class="btn xs teal"><svg class="bi" width="10" height="11" viewBox="0 0 10 11"><path d="M.9 1.300h5.600l2.600 2.400v6.500H.9z" fill="none" stroke="#fff" stroke-width="1" opacity=".8"/><path d="M6.300 1.500v2.500h2.600" fill="none" stroke="#fff" stroke-width=".8" opacity=".8"/><path d="M2.600 5.100h3M2.600 6.800h4.700M2.600 8.500h4.700" stroke="#fff" stroke-width=".9" opacity=".8"/></svg>章节管理</span><span class="btn xs blue"><svg class="bi" width="11" height="11" viewBox="0 0 11 11"><path d="M1 10.400l.5-2.700L8.300 1l2.100 2.100-6.700 6.700z" fill="#fff"/></svg>编辑</span><span class="dots">…</span></div>
</div>
<div class="tr" style="top:156px">
<div class="td c0"><span class="cb"></span></div>
<div class="td c1 ctr">14</div>
<div class="td c2"><span class="cv k14"><i></i><i></i><i></i><u>WWW.QID</u><b>明宇</b></span></div>
<div class="td c3 dk">带着农场混异界</div>
<div class="td c4 ctr">玄幻</div>
<div class="td c5">明宇</div>
<div class="td c6 ctr">bqg90</div>
<div class="td c7 dk">第一千八百六十七章 白热…</div>
<div class="td c8 ctr">2025-03-10 18:34:07</div>
<div class="td c9c ctr">连载中</div>
<div class="td c10 ctr"><span class="sw"><em>开启</em><i></i></span></div>
<div class="td c11"><span class="btn xs teal"><svg class="bi" width="10" height="11" viewBox="0 0 10 11"><path d="M.9 1.300h5.600l2.600 2.400v6.500H.9z" fill="none" stroke="#fff" stroke-width="1" opacity=".8"/><path d="M6.300 1.500v2.500h2.600" fill="none" stroke="#fff" stroke-width=".8" opacity=".8"/><path d="M2.600 5.100h3M2.600 6.800h4.700M2.600 8.500h4.700" stroke="#fff" stroke-width=".9" opacity=".8"/></svg>章节管理</span><span class="btn xs blue"><svg class="bi" width="11" height="11" viewBox="0 0 11 11"><path d="M1 10.400l.5-2.700L8.300 1l2.100 2.100-6.700 6.700z" fill="#fff"/></svg>编辑</span><span class="dots">…</span></div>
</div>
<div class="tr" style="top:195px">
<div class="td c0"><span class="cb"></span></div>
<div class="td c1 ctr">13</div>
<div class="td c2"><svg class="brk" width="16" height="16" viewBox="0 0 16 16"><path d="M.5 .5h10.200l4.800 4.600v10.400h-15z" fill="#c7d9f6"/><path d="M1 1h9.500v3.500H1z" fill="#dbe6fa"/><path d="M2.400 5.700c-.1-.9.800-1.400 1.600-1.100.5-1.500 2.500-1.500 2.900 0 .9-.2 1.500.4 1.300 1.100z" fill="#fff"/><ellipse cx="7.400" cy="15.500" rx="6.600" ry="6.100" fill="#56ab3b"/><ellipse cx="13.200" cy="16" rx="2.600" ry="3.200" fill="#56ab3b"/><path d="M.5 .5h10.200l4.800 4.600v10.400h-15z" fill="none" stroke="#8b8b8b"/><path d="M10.600 .8v4.300h4.600" fill="#f4f4f4" stroke="#8b8b8b"/><path d="M6.600 16.500L16.500 6.900v3.600L10.300 16.500z" fill="#fff"/></svg></div>
<div class="td c3 dk">我真的是反派啊</div>
<div class="td c4 ctr">玄幻</div>
<div class="td c5">情史尽成悔</div>
<div class="td c6 ctr">bqg90</div>
<div class="td c7 dk">第2741章 彼此的谋划，利用</div>
<div class="td c8 ctr">2025-03-10 18:34:00</div>
<div class="td c9c ctr">连载中</div>
<div class="td c10 ctr"><span class="sw"><em>开启</em><i></i></span></div>
<div class="td c11"><span class="btn xs teal"><svg class="bi" width="10" height="11" viewBox="0 0 10 11"><path d="M.9 1.300h5.600l2.600 2.400v6.500H.9z" fill="none" stroke="#fff" stroke-width="1" opacity=".8"/><path d="M6.300 1.500v2.500h2.600" fill="none" stroke="#fff" stroke-width=".8" opacity=".8"/><path d="M2.600 5.100h3M2.600 6.800h4.700M2.600 8.500h4.700" stroke="#fff" stroke-width=".9" opacity=".8"/></svg>章节管理</span><span class="btn xs blue"><svg class="bi" width="11" height="11" viewBox="0 0 11 11"><path d="M1 10.400l.5-2.700L8.300 1l2.100 2.100-6.700 6.700z" fill="#fff"/></svg>编辑</span><span class="dots">…</span></div>
</div>
<div class="tr" style="top:234px">
<div class="td c0"><span class="cb"></span></div>
<div class="td c1 ctr">12</div>
<div class="td c2"><span class="cv k12"><i></i><i></i><i></i></span></div>
<div class="td c3 dk">九星霸体诀</div>
<div class="td c4 ctr">玄幻</div>
<div class="td c5">平凡魔术师</div>
<div class="td c6 ctr">bqg90</div>
<div class="td c7 dk">第六千五百五十七章 八门…</div>
<div class="td c8 ctr">2025-03-11 02:34:57</div>
<div class="td c9c ctr">连载中</div>
<div class="td c10 ctr"><span class="sw"><em>开启</em><i></i></span></div>
<div class="td c11"><span class="btn xs teal"><svg class="bi" width="10" height="11" viewBox="0 0 10 11"><path d="M.9 1.300h5.600l2.600 2.400v6.500H.9z" fill="none" stroke="#fff" stroke-width="1" opacity=".8"/><path d="M6.300 1.500v2.500h2.600" fill="none" stroke="#fff" stroke-width=".8" opacity=".8"/><path d="M2.600 5.100h3M2.600 6.800h4.700M2.600 8.500h4.700" stroke="#fff" stroke-width=".9" opacity=".8"/></svg>章节管理</span><span class="btn xs blue"><svg class="bi" width="11" height="11" viewBox="0 0 11 11"><path d="M1 10.400l.5-2.700L8.300 1l2.100 2.100-6.700 6.700z" fill="#fff"/></svg>编辑</span><span class="dots">…</span></div>
</div>
<div class="tr" style="top:273px">
<div class="td c0"><span class="cb"></span></div>
<div class="td c1 ctr">11</div>
<div class="td c2"><span class="cv k11"><i></i><i></i><i></i><b>穿</b><b class="b2">越</b></span></div>
<div class="td c3 dk">穿越者纵横动漫世界</div>
<div class="td c4 ctr">玄幻</div>
<div class="td c5">龙之宫</div>
<div class="td c6 ctr">bqg90</div>
<div class="td c7 dk">第3954章 死囚忍者</div>
<div class="td c8 ctr">2025-03-10 18:41:38</div>
<div class="td c9c ctr">连载中</div>
<div class="td c10 ctr"><span class="sw"><em>开启</em><i></i></span></div>
<div class="td c11"><span class="btn xs teal"><svg class="bi" width="10" height="11" viewBox="0 0 10 11"><path d="M.9 1.300h5.600l2.600 2.400v6.500H.9z" fill="none" stroke="#fff" stroke-width="1" opacity=".8"/><path d="M6.300 1.500v2.500h2.600" fill="none" stroke="#fff" stroke-width=".8" opacity=".8"/><path d="M2.600 5.100h3M2.600 6.800h4.700M2.600 8.500h4.700" stroke="#fff" stroke-width=".9" opacity=".8"/></svg>章节管理</span><span class="btn xs blue"><svg class="bi" width="11" height="11" viewBox="0 0 11 11"><path d="M1 10.400l.5-2.700L8.300 1l2.100 2.100-6.700 6.700z" fill="#fff"/></svg>编辑</span><span class="dots">…</span></div>
</div>
<div class="tr" style="top:312px">
<div class="td c0"><span class="cb"></span></div>
<div class="td c1 ctr">10</div>
<div class="td c2"><span class="cv k10"><i></i><i></i><i></i></span></div>
<div class="td c3 dk">重生都市仙帝</div>
<div class="td c4 ctr">玄幻</div>
<div class="td c5">万鲤鱼</div>
<div class="td c6 ctr">bqg90</div>
<div class="td c7 dk">第5871章 山海九象</div>
<div class="td c8 ctr">2025-03-10 18:41:37</div>
<div class="td c9c ctr">连载中</div>
<div class="td c10 ctr"><span class="sw"><em>开启</em><i></i></span></div>
<div class="td c11"><span class="btn xs teal"><svg class="bi" width="10" height="11" viewBox="0 0 10 11"><path d="M.9 1.300h5.600l2.600 2.400v6.500H.9z" fill="none" stroke="#fff" stroke-width="1" opacity=".8"/><path d="M6.300 1.500v2.500h2.600" fill="none" stroke="#fff" stroke-width=".8" opacity=".8"/><path d="M2.600 5.100h3M2.600 6.800h4.700M2.600 8.500h4.700" stroke="#fff" stroke-width=".9" opacity=".8"/></svg>章节管理</span><span class="btn xs blue"><svg class="bi" width="11" height="11" viewBox="0 0 11 11"><path d="M1 10.400l.5-2.700L8.300 1l2.100 2.100-6.700 6.700z" fill="#fff"/></svg>编辑</span><span class="dots">…</span></div>
</div>
<div class="tr" style="top:351px">
<div class="td c0"><span class="cb"></span></div>
<div class="td c1 ctr">9</div>
<div class="td c2"><span class="cv k9"><b>港</b></span></div>
<div class="td c3 dk">港综世界的警察</div>
<div class="td c4 ctr">都市</div>
<div class="td c5">有梦虾</div>
<div class="td c6 ctr">bqg90</div>
<div class="td c7 dk">第一千五百七十八章 懂事</div>
<div class="td c8 ctr">2025-03-10 18:41:35</div>
<div class="td c9c ctr">连载中</div>
<div class="td c10 ctr"><span class="sw"><em>开启</em><i></i></span></div>
<div class="td c11"><span class="btn xs teal"><svg class="bi" width="10" height="11" viewBox="0 0 10 11"><path d="M.9 1.300h5.600l2.600 2.400v6.500H.9z" fill="none" stroke="#fff" stroke-width="1" opacity=".8"/><path d="M6.300 1.500v2.500h2.600" fill="none" stroke="#fff" stroke-width=".8" opacity=".8"/><path d="M2.600 5.100h3M2.600 6.800h4.700M2.600 8.500h4.700" stroke="#fff" stroke-width=".9" opacity=".8"/></svg>章节管理</span><span class="btn xs blue"><svg class="bi" width="11" height="11" viewBox="0 0 11 11"><path d="M1 10.400l.5-2.700L8.300 1l2.100 2.100-6.700 6.700z" fill="#fff"/></svg>编辑</span><span class="dots">…</span></div>
</div>
<div class="tr" style="top:390px">
<div class="td c0"><span class="cb"></span></div>
<div class="td c1 ctr">8</div>
<div class="td c2"><svg class="brk" width="16" height="16" viewBox="0 0 16 16"><path d="M.5 .5h10.200l4.800 4.600v10.400h-15z" fill="#c7d9f6"/><path d="M1 1h9.500v3.500H1z" fill="#dbe6fa"/><path d="M2.400 5.700c-.1-.9.800-1.400 1.600-1.100.5-1.500 2.500-1.500 2.900 0 .9-.2 1.500.4 1.300 1.100z" fill="#fff"/><ellipse cx="7.400" cy="15.500" rx="6.600" ry="6.100" fill="#56ab3b"/><ellipse cx="13.200" cy="16" rx="2.600" ry="3.200" fill="#56ab3b"/><path d="M.5 .5h10.200l4.800 4.600v10.400h-15z" fill="none" stroke="#8b8b8b"/><path d="M10.600 .8v4.300h4.600" fill="#f4f4f4" stroke="#8b8b8b"/><path d="M6.600 16.500L16.500 6.900v3.600L10.300 16.500z" fill="#fff"/></svg></div>
<div class="td c3 dk">武逆焚天</div>
<div class="td c4 ctr">历史</div>
<div class="td c5">疯橘子</div>
<div class="td c6 ctr">bqg90</div>
<div class="td c7 dk">第五千五百八十一章 破局…</div>
<div class="td c8 ctr">2025-03-10 21:32:41</div>
<div class="td c9c ctr">连载中</div>
<div class="td c10 ctr"><span class="sw"><em>开启</em><i></i></span></div>
<div class="td c11"><span class="btn xs teal"><svg class="bi" width="10" height="11" viewBox="0 0 10 11"><path d="M.9 1.300h5.600l2.600 2.400v6.500H.9z" fill="none" stroke="#fff" stroke-width="1" opacity=".8"/><path d="M6.300 1.500v2.500h2.600" fill="none" stroke="#fff" stroke-width=".8" opacity=".8"/><path d="M2.600 5.100h3M2.600 6.800h4.700M2.600 8.500h4.700" stroke="#fff" stroke-width=".9" opacity=".8"/></svg>章节管理</span><span class="btn xs blue"><svg class="bi" width="11" height="11" viewBox="0 0 11 11"><path d="M1 10.400l.5-2.700L8.300 1l2.100 2.100-6.700 6.700z" fill="#fff"/></svg>编辑</span><span class="dots">…</span></div>
</div>
<div class="tr" style="top:429px">
<div class="td c0"><span class="cb"></span></div>
<div class="td c1 ctr">7</div>
<div class="td c2"><span class="cv k7"><i></i><i></i><i></i></span></div>
<div class="td c3 dk">校花的贴身高手</div>
<div class="td c4 ctr">都市</div>
<div class="td c5">鱼人二代</div>
<div class="td c6 ctr">bqg90</div>
<div class="td c7 dk">第12063章</div>
<div class="td c8 ctr">2025-03-10 21:32:39</div>
<div class="td c9c ctr">连载中</div>
<div class="td c10 ctr"><span class="sw"><em>开启</em><i></i></span></div>
<div class="td c11"><span class="btn xs teal"><svg class="bi" width="10" height="11" viewBox="0 0 10 11"><path d="M.9 1.300h5.600l2.600 2.400v6.500H.9z" fill="none" stroke="#fff" stroke-width="1" opacity=".8"/><path d="M6.300 1.500v2.500h2.600" fill="none" stroke="#fff" stroke-width=".8" opacity=".8"/><path d="M2.600 5.100h3M2.600 6.800h4.700M2.600 8.500h4.700" stroke="#fff" stroke-width=".9" opacity=".8"/></svg>章节管理</span><span class="btn xs blue"><svg class="bi" width="11" height="11" viewBox="0 0 11 11"><path d="M1 10.400l.5-2.700L8.300 1l2.100 2.100-6.700 6.700z" fill="#fff"/></svg>编辑</span><span class="dots">…</span></div>
</div>
<div class="tr" style="top:468px">
<div class="td c0"><span class="cb"></span></div>
<div class="td c1 ctr">6</div>
<div class="td c2"><svg class="brk" width="16" height="16" viewBox="0 0 16 16"><path d="M.5 .5h10.200l4.800 4.600v10.400h-15z" fill="#c7d9f6"/><path d="M1 1h9.500v3.500H1z" fill="#dbe6fa"/><path d="M2.400 5.700c-.1-.9.800-1.400 1.600-1.100.5-1.500 2.500-1.500 2.900 0 .9-.2 1.500.4 1.300 1.100z" fill="#fff"/><ellipse cx="7.400" cy="15.500" rx="6.600" ry="6.100" fill="#56ab3b"/><ellipse cx="13.200" cy="16" rx="2.600" ry="3.200" fill="#56ab3b"/><path d="M.5 .5h10.200l4.800 4.600v10.400h-15z" fill="none" stroke="#8b8b8b"/><path d="M10.600 .8v4.300h4.600" fill="#f4f4f4" stroke="#8b8b8b"/><path d="M6.600 16.500L16.500 6.900v3.600L10.300 16.500z" fill="#fff"/></svg></div>
<div class="td c3 dk">我娘子天下第一</div>
<div class="td c4 ctr">历史</div>
<div class="td c5">小小一蚍蜉</div>
<div class="td c6 ctr">bqg90</div>
<div class="td c7 dk">第五百五十四章 你看呢</div>
<div class="td c8 ctr">2025-03-10 21:32:35</div>
<div class="td c9c ctr">连载中</div>
<div class="td c10 ctr"><span class="sw"><em>开启</em><i></i></span></div>
<div class="td c11"><span class="btn xs teal"><svg class="bi" width="10" height="11" viewBox="0 0 10 11"><path d="M.9 1.300h5.600l2.600 2.400v6.500H.9z" fill="none" stroke="#fff" stroke-width="1" opacity=".8"/><path d="M6.300 1.500v2.500h2.600" fill="none" stroke="#fff" stroke-width=".8" opacity=".8"/><path d="M2.600 5.100h3M2.600 6.800h4.700M2.600 8.500h4.700" stroke="#fff" stroke-width=".9" opacity=".8"/></svg>章节管理</span><span class="btn xs blue"><svg class="bi" width="11" height="11" viewBox="0 0 11 11"><path d="M1 10.400l.5-2.700L8.300 1l2.100 2.100-6.700 6.700z" fill="#fff"/></svg>编辑</span><span class="dots">…</span></div>
</div>
<div class="tr" style="top:507px">
<div class="td c0"><span class="cb"></span></div>
<div class="td c1 ctr">5</div>
<div class="td c2"><span class="cv k5"><i></i><i></i><i></i></span></div>
<div class="td c3 dk">别叫我恶魔</div>
<div class="td c4 ctr">玄幻</div>
<div class="td c5">弈青锋</div>
<div class="td c6 ctr">bqg90</div>
<div class="td c7 dk">第1796章 老祖宗优选</div>
<div class="td c8 ctr">2025-03-11 12:28:42</div>
<div class="td c9c ctr">连载中</div>
<div class="td c10 ctr"><span class="sw"><em>开启</em><i></i></span></div>
<div class="td c11"><span class="btn xs teal"><svg class="bi" width="10" height="11" viewBox="0 0 10 11"><path d="M.9 1.300h5.600l2.600 2.400v6.500H.9z" fill="none" stroke="#fff" stroke-width="1" opacity=".8"/><path d="M6.300 1.500v2.500h2.600" fill="none" stroke="#fff" stroke-width=".8" opacity=".8"/><path d="M2.600 5.100h3M2.600 6.800h4.700M2.600 8.500h4.700" stroke="#fff" stroke-width=".9" opacity=".8"/></svg>章节管理</span><span class="btn xs blue"><svg class="bi" width="11" height="11" viewBox="0 0 11 11"><path d="M1 10.400l.5-2.700L8.300 1l2.100 2.100-6.700 6.700z" fill="#fff"/></svg>编辑</span><span class="dots">…</span></div>
</div>
    </div>
    <div id="fixsh"></div>
    <div id="sb"><div class="au"></div><div class="thumb"></div><div class="ad"></div></div>
    <div id="pgn">
      <svg style="position:absolute;left:14px;top:13px" width="10" height="14" viewBox="0 0 10 14"><path d="M8 1L2 7l6 6" fill="none" stroke="#333" stroke-width="1.300"/></svg>
      <span style="left:50px">1</span>
      <span style="left:80px">2</span>
      <span style="left:110px">3</span>
      <span class="cur" style="left:128px;width:31px">4</span>
      <svg style="position:absolute;left:172px;top:13px" width="10" height="14" viewBox="0 0 10 14"><path d="M2 1l6 6-6 6" fill="none" stroke="#d2d2d2" stroke-width="1.300"/></svg>
      <span class="g" style="left:197px">到第</span>
      <span class="box" style="left:231px;width:40px">4</span>
      <span class="g" style="left:280px">页</span>
      <span class="box" style="left:303px;width:46px">确定</span>
      <span style="left:358px">共 108 条</span>
      <span class="box" style="left:419px;width:75px;text-align:left;padding-left:7px">30 条/页<svg style="position:absolute;left:57px;top:8px" width="10" height="8" viewBox="0 0 10 8"><path d="M1 1.500l4 4 4-4" fill="none" stroke="#111" stroke-width="1.800"/></svg></span>
    </div>
  </div>
</div>

<!-- ================= CONTEXT MENU ================= -->
<div id="ctx">
  <div style="top:12px">屏幕截图<span> Ctrl + Shift + F</span></div>
  <div style="top:41px">屏幕录制<span> Ctrl + Alt + S</span></div>
  <div style="top:70px">屏幕识图<span> Ctrl + Alt + O</span></div>
  <div style="top:99px">屏幕翻译<span> Ctrl + Alt + F</span></div>
  <div style="top:128px">截图时隐藏当前窗口</div>
  <svg width="16" height="12" viewBox="0 0 16 12"><path d="M1 6.500l4 4L15 1" fill="none" stroke="#555" stroke-width="1"/></svg>
</div>

</div>

</body>
</html>
